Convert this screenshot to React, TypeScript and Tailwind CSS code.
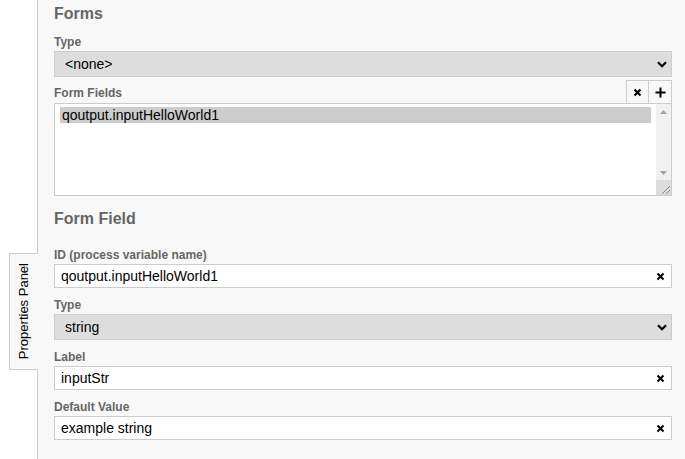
import React from "react";

const XIcon = () => (
  <svg width="9" height="9" viewBox="0 0 9 9" className="block">
    <path d="M1.5 1.5 L7.5 7.5 M7.5 1.5 L1.5 7.5" stroke="#000" strokeWidth="2" />
  </svg>
);

const PlusIcon = () => (
  <svg width="11" height="11" viewBox="0 0 11 11" className="block">
    <path d="M5.5 0.5 V10.5 M0.5 5.5 H10.5" stroke="#000" strokeWidth="2" />
  </svg>
);

const Chevron = () => (
  <svg width="10" height="7" viewBox="0 0 10 7" className="block">
    <path d="M1 1.2 L5 5.2 L9 1.2" stroke="#000" strokeWidth="2.2" fill="none" />
  </svg>
);

const Label = ({ children }: { children: React.ReactNode }) => (
  <div className="text-[12px] leading-[14px] font-bold text-[#666] mb-[2px]">{children}</div>
);

const TextInput = ({ value }: { value: string }) => (
  <div className="h-[24px] flex items-center justify-between border border-[#ccc] bg-white pl-[6px] pr-[6px]">
    <span className="text-[14px] text-black">{value}</span>
    <XIcon />
  </div>
);

const Select = ({ value }: { value: string }) => (
  <div className="h-[26px] flex items-center justify-between border border-[#ccc] bg-[#dddddd] pl-[10px] pr-[4px]">
    <span className="text-[14px] text-black">{value}</span>
    <Chevron />
  </div>
);

export default function App() {
  return (
    <div className="flex h-[459px] w-[685px] overflow-hidden bg-white font-['Liberation_Sans',Arial,sans-serif]">
      {/* side tab */}
      <div className="w-[37px] shrink-0 pt-[253px] pl-[9px]">
        <div className="relative z-10 w-[29px] h-[117px] border border-r-0 border-[#ccc] bg-[#f8f8f8] flex items-center justify-center">
          <span className="[writing-mode:vertical-rl] rotate-180 text-[13px] text-black whitespace-nowrap">
            Properties Panel
          </span>
        </div>
      </div>

      {/* panel */}
      <div className="flex-1 border-l border-[#ccc] bg-[#f8f8f8] pl-[16px] pr-[13px] pt-[4px]">
        <div className="text-[16px] leading-[20px] font-bold text-[#666] mb-[11px]">Forms</div>

        <Label>Type</Label>
        <Select value="<none>" />

        <div className="mt-[3px] flex items-end justify-between h-[23px]">
          <div className="text-[12px] leading-[14px] font-bold text-[#666] mb-[3px]">Form Fields</div>
          <div className="flex h-[23px]">
            <div className="w-[23px] h-[23px] border border-b-0 border-[#ccc] flex items-center justify-center">
              <XIcon />
            </div>
            <div className="w-[23px] h-[23px] border border-l-0 border-b-0 border-[#ccc] flex items-center justify-center">
              <PlusIcon />
            </div>
          </div>
        </div>

        <div className="h-[93px] border border-[#ccc] bg-white flex">
          <div className="flex-1 pl-[5px] pr-[5px] pt-[3px]">
            <div className="h-[16px] bg-[#cccccc] pl-[2px] text-[14px] leading-[16px] text-black">
              qoutput.inputHelloWorld1
            </div>
          </div>
          <div className="w-[15px] bg-[#f1f1f1] flex flex-col">
            <div className="h-[15px] flex items-center justify-center">
              <svg width="7" height="4" viewBox="0 0 7 4"><path d="M0 4 L3.5 0 L7 4 Z" fill="#a3a3a3" /></svg>
            </div>
            <div className="flex-1" />
            <div className="h-[15px] flex items-center justify-center">
              <svg width="7" height="4" viewBox="0 0 7 4"><path d="M0 0 L7 0 L3.5 4 Z" fill="#a3a3a3" /></svg>
            </div>
            <div className="h-[15px] bg-[#dcdcdc] flex items-end justify-end">
              <svg width="12" height="12" viewBox="0 0 12 12">
                <path d="M3 11 L11 3 M7 11 L11 7" stroke="#888" strokeWidth="1" />
              </svg>
            </div>
          </div>
        </div>

        <div className="mt-[13px] text-[16px] leading-[20px] font-bold text-[#666] mb-[19px]">Form Field</div>

        <Label>ID (process variable name)</Label>
        <TextInput value="qoutput.inputHelloWorld1" />

        <div className="mt-[10px]">
          <Label>Type</Label>
          <Select value="string" />
        </div>

        <div className="mt-[10px]">
          <Label>Label</Label>
          <TextInput value="inputStr" />
        </div>

        <div className="mt-[10px]">
          <Label>Default Value</Label>
          <TextInput value="example string" />
        </div>
      </div>
    </div>
  );
}
